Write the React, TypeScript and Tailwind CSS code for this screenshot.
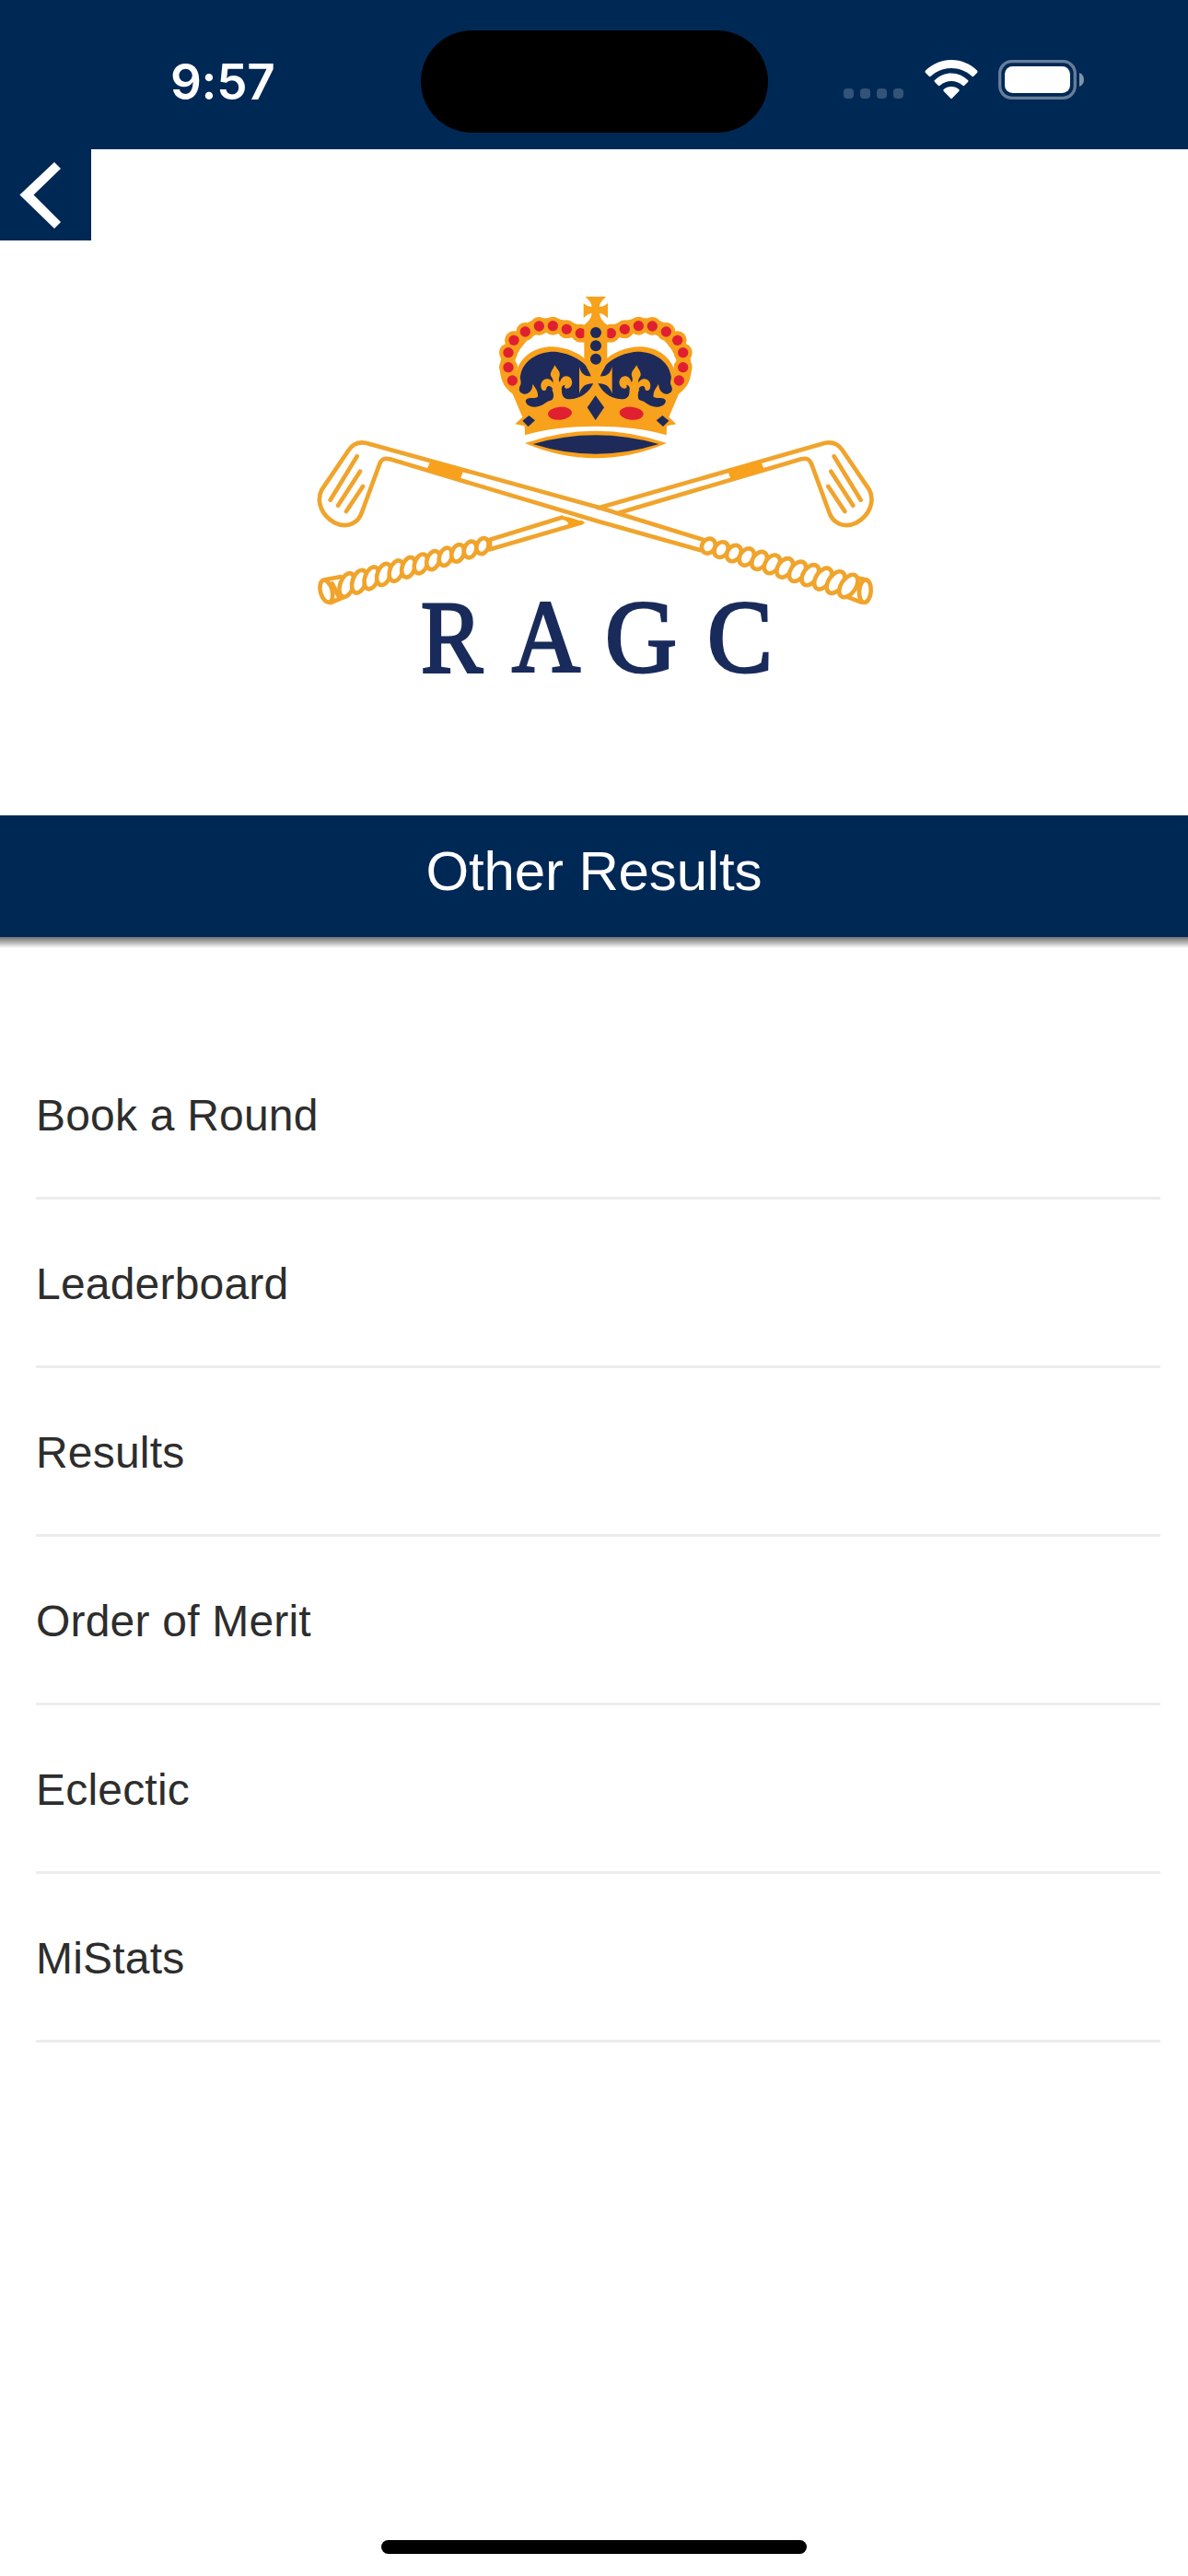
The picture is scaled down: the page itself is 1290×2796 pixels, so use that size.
const menuItems = ['Book a Round', 'Leaderboard', 'Results', 'Order of Merit', 'Eclectic', 'MiStats'];

const GOLD = '#f8a11c';
const LINE = '#f0a42c';
const NAVY = '#1e2a5a';
const RED = '#e02030';

// left half of the arch, the right half is mirrored
const beads = [
  [331, 155], [286, 142], [241, 131], [196, 132], [151, 150],
  [114, 178], [96, 218], [96, 266], [109, 309],
];

const leftGrip = Array.from({ length: 12 }, (_, i) => {
  const t = i / 11;
  return { x: 140 + t * 442, y: 525 - t * 127, rx: 22 - t * 3, ry: 40 - t * 14 };
});

const rightGrip = Array.from({ length: 12 }, (_, i) => {
  const t = i / 11;
  return { x: 1318 + t * 456, y: 398 + t * 130, rx: 21 + t * 3, ry: 25 + t * 16 };
});

function StatusBar() {
  return (
    <header className="flex h-[162px] items-start bg-[#002855] pt-[33px]">
      <div className="w-[457px] pt-[23px] pl-[185px] font-['Inter'] text-[53px] leading-[66px] font-semibold tracking-[-0.3px] text-white">
        9:57
      </div>
      <div className="h-[111px] w-[377px] rounded-full bg-black" />
      <div className="flex items-start pt-[32px] pl-[82px]">
        <div className="flex gap-[7px] pt-[31px]">
          {[0, 1, 2, 3].map((dot) => (
            <span key={dot} className="h-[11px] w-[11px] rounded-[4px] bg-white/20" />
          ))}
        </div>
        <svg className="ml-[23px] h-[43px] w-[58px]" viewBox="0 0 58 43" fill="white">
          <path d="M29 0 C40 0 50 4.500 57 11.500 Q58 13 57 14 L53 18 Q52 18.500 51 17.500 C45 12 37.500 9 29 9 C20.500 9 13 12 7 17.500 Q6 18.500 5 18 L1 14 Q0 13 1 11.500 C8 4.500 18 0 29 0Z" />
          <path d="M29 14.500 C36 14.500 42.500 17.500 47 22 Q48 23 47 24 L43 28 Q42 28.500 41 27.500 C37.500 24.500 33.500 23 29 23 C24.500 23 20.500 24.500 17 27.500 Q16 28.500 15 28 L11 24 Q10 23 11 22 C15.500 17.500 22 14.500 29 14.500Z" />
          <path d="M29 29 C32.500 29 35 30 37.300 32 Q38.200 33 37.300 34 L30 41.500 Q29 42.500 28 41.500 L20.700 34 Q19.800 33 20.700 32 C23 30 25.500 29 29 29Z" />
        </svg>
        <svg className="ml-[22px] h-[43px] w-[94px]" viewBox="0 0 94 43">
          <rect x="1.700" y="1.700" width="81.600" height="39.600" rx="13" fill="none" stroke="white" strokeOpacity="0.400" strokeWidth="3.300" />
          <rect x="7" y="7" width="71" height="29" rx="8.500" fill="white" />
          <path d="M88 14 Q93 16 93 21.500 Q93 27 88 29Z" fill="white" fillOpacity="0.500" />
        </svg>
      </div>
    </header>
  );
}

function CrownHalf() {
  return (
    <g>
      <path
        d="M352 165 C300 140 190 95 130 175 C85 225 75 300 125 335"
        fill="none"
        stroke={GOLD}
        strokeWidth="46"
      />
      {beads.map(([x, y]) => (
        <circle key={x + y} cx={x} cy={y} r="30" fill={GOLD} />
      ))}
      <path
        d="M124 275 C140 225 190 198 240 199 C285 201 325 220 345 238 L382 235 V458 C300 458 215 466 150 487 L149 457 L118 451 L142 428 L98 325Z"
        fill={GOLD}
      />
      {beads.map(([x, y]) => (
        <circle key={x + y} cx={x} cy={y} r="17" fill={RED} />
      ))}
      <path
        d="M136 290 C143 246 190 215 245 215 C302 219 352 250 369 290 L373 318 C360 345 335 368 297 370 C277 370 267 358 270 338 L238 338 C248 358 246 372 230 375 C214 380 210 393 183 395 C160 396 150 382 153 373 C160 361 175 370 191 363 C196 350 185 335 176 322 C174 343 162 354 147 353 C131 350 128 338 135 325 C141 310 131 305 136 290Z"
        fill={NAVY}
      />
      <path
        d="M327 264 C334 292 350 299 382 294 V320 C352 316 336 325 327 352Z"
        fill={GOLD}
      />
      {/* fleur-de-lis */}
      <path
        d="M247 259 C256 274 268 282 262 298 C259 306 261 312 264 316 C266 298 282 290 294 297 C310 308 305 334 287 335 C279 335 277 328 281 323 C271 324 268 332 270 345 C271 362 276 368 286 372 L276 395 H222 L238 374 C246 366 243 345 239 334 C232 325 224 325 220 333 C221 343 211 345 205 338 C197 323 206 304 222 304 C233 304 238 311 241 317 C243 310 241 303 236 297 C228 284 243 272 247 259Z"
        fill={GOLD}
      />
      <path d="M176 320 L193 362 C184 360 174 358 161 357 C170 348 176 338 176 320Z" fill={GOLD} />
      <ellipse cx="264" cy="416" rx="39" ry="21" fill={RED} transform="rotate(-5 264 416)" />
      <path d="M142 440 L163 423 L183 439 L161 459Z" fill={NAVY} />
    </g>
  );
}

function Crown() {
  return (
    <g transform="translate(190 0) scale(0.33333)">
      <CrownHalf />
      <g transform="translate(761 0) scale(-1 1)">
        <CrownHalf />
      </g>
      <path
        d="M346 36 H415 C400 48 394 58 393 69 C402 69 412 65 420 57 V106 C411 96 402 91 393 90 C395 105 402 116 418 128 V240 C416 265 398 280 395 300 H366 C363 280 345 265 343 240 V128 C359 116 366 105 368 90 C359 91 350 96 341 106 V57 C349 65 358 69 368 69 C367 58 361 48 346 36Z"
        fill={GOLD}
      />
      <circle cx="381" cy="153" r="18" fill={NAVY} />
      <circle cx="381" cy="196" r="18" fill={NAVY} />
      <circle cx="381" cy="239" r="18" fill={NAVY} />
      <path d="M380 358 L408 397 L380 438 L353 397Z" fill={NAVY} />
      <path d="M150 513 Q380 433 612 513 Q380 611 150 513Z" fill={GOLD} />
      <path d="M176 516 Q380 458 586 516 Q380 580 176 516Z" fill={NAVY} />
    </g>
  );
}

function ClubHead() {
  return (
    <g>
      <path d="M173 106 L86 248 M183 155 L111 266 M192 204 L138 285" />
      <path d="M414 122 L518 151 L507 181 L402 150Z" fill={GOLD} stroke={GOLD} strokeWidth="4" />
    </g>
  );
}

function Clubs() {
  return (
    <g
      transform="translate(0 150) scale(0.33333)"
      fill="none"
      stroke={LINE}
      strokeWidth="14"
      strokeLinecap="round"
      strokeLinejoin="round"
    >
      <path d="M1300 377 L960 272 L215 66 C185 56 160 64 145 87 L58 215 C38 255 60 300 100 322 C140 342 178 325 190 285 L245 135 C252 114 262 111 280 115 L960 318 L1290 411" />
      <ClubHead />
      <g transform="translate(1900 0) scale(-1 1)">
        <path d="M940 274 L215 66 C185 56 160 64 145 87 L58 215 C38 255 60 300 100 322 C140 342 178 325 190 285 L245 135 C252 114 262 111 280 115 L875 290" />
        <ClubHead />
      </g>
      <path d="M606 409 V377 L840 305 M606 409 L905 322" />
      <path d="M838 299 L870 306 L918 322 L846 344 Q880 320 838 311Z" fill={GOLD} stroke="none" />

      <path d="M68 508 L120 498 M88 582 L130 564 M92 520 L112 560" />
      {leftGrip.map((twist) => (
        <ellipse
          key={twist.x}
          cx={twist.x}
          cy={twist.y}
          rx={twist.rx}
          ry={twist.ry}
          fill="white"
          transform={`rotate(20 ${twist.x} ${twist.y})`}
        />
      ))}
      <ellipse cx="73" cy="545" rx="19" ry="37" fill="white" transform="rotate(-15 73 545)" />

      <path d="M1780 497 L1832 508 M1760 560 L1815 581" />
      {rightGrip.map((twist) => (
        <ellipse
          key={twist.x}
          cx={twist.x}
          cy={twist.y}
          rx={twist.rx}
          ry={twist.ry}
          fill="white"
          transform={`rotate(34 ${twist.x} ${twist.y})`}
        />
      ))}
      <ellipse cx="1828" cy="545" rx="19" ry="37" fill="white" transform="rotate(5 1828 545)" />
    </g>
  );
}

function ClubLogo() {
  return (
    <svg className="mt-[148px] h-[470px] w-[630px]" viewBox="0 0 630 470">
      <Clubs />
      <Crown />
      <g fill="#192b5b" stroke="#192b5b" strokeWidth="3" fontFamily="'Liberation Serif', serif" fontSize="112">
        <text x="127" y="419" textLength="67" lengthAdjust="spacingAndGlyphs">R</text>
        <text x="226" y="419" textLength="74" lengthAdjust="spacingAndGlyphs">A</text>
        <text x="327" y="419" textLength="78" lengthAdjust="spacingAndGlyphs">G</text>
        <text x="438" y="419" textLength="71" lengthAdjust="spacingAndGlyphs">C</text>
      </g>
    </svg>
  );
}

export default function App() {
  return (
    <div className="flex h-[2796px] w-[1290px] flex-col bg-white font-['Liberation_Sans',sans-serif]">
      <StatusBar />

      <section className="grid h-[723px] grid-cols-[99px_1fr_99px] items-start justify-items-center">
        <button className="h-[99px] w-[99px] bg-[#002855]" aria-label="Back">
          <svg className="h-[99px] w-[99px]" viewBox="0 0 99 99" fill="white">
            <path d="M21.400 49.500 L59 14 L66 21 L36.500 49.500 L66 79 L59 86Z" />
          </svg>
        </button>
        <ClubLogo />
      </section>

      <h1 className="h-[132px] bg-[#002855] text-center text-[60px] leading-[121px] tracking-[-0.15px] text-white">
        Other Results
      </h1>
      <div className="h-[12px] bg-linear-to-b from-[#707070] to-white" />

      <nav className="mt-[90px] mr-[30px] ml-[39px]">
        {menuItems.map((item) => (
          <a
            key={item}
            className="flex h-[183px] items-center border-b-[3px] border-[#ececec] pt-[4px] text-[48px] tracking-[0.2px] text-[#2d2d2d]"
          >
            {item}
          </a>
        ))}
      </nav>

      <div className="mx-auto mt-auto mb-[24px] h-[15px] w-[462px] rounded-full bg-black" />
    </div>
  );
}
